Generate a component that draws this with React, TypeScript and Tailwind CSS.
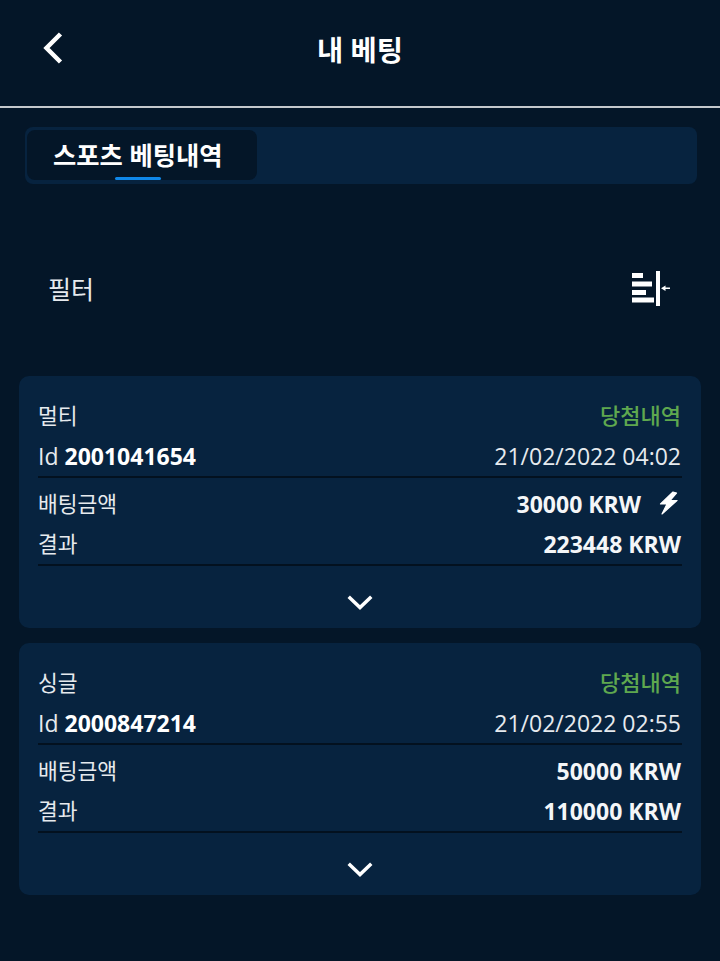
import React from "react";

const font = { fontFamily: '"Open Sans", "Noto Sans CJK KR", sans-serif' };

type Bet = {
  kind: string;
  id: string;
  date: string;
  stake: string;
  result: string;
  bolt?: boolean;
};

const bets: Bet[] = [
  { kind: "멀티", id: "2001041654", date: "21/02/2022 04:02", stake: "30000 KRW", result: "223448 KRW", bolt: true },
  { kind: "싱글", id: "2000847214", date: "21/02/2022 02:55", stake: "50000 KRW", result: "110000 KRW" },
];

const BetCard: React.FC<{ bet: Bet }> = ({ bet }) => {
  return (
    <div className="h-[252px] rounded-[10px] bg-[#07233f] pl-[19px] pr-[20px] pt-[20px] text-[#e6eaee]">
      <div className="flex h-[41px] items-start justify-between text-[21.5px] leading-[39px]">
        <span>{bet.kind}</span>
        <span className="text-[22px] font-medium text-[#5fa84f]">당첨내역</span>
      </div>
      <div className="-mr-[1px] flex h-[41px] items-center justify-between border-b-2 border-[#03111f] pr-[1px] text-[23px]">
        <span>
          Id <b className="font-bold text-white">{bet.id}</b>
        </span>
        <span>{bet.date}</span>
      </div>
      <div className="mt-[5px] flex h-[41px] items-center justify-between pt-[1px] text-[21.5px]">
        <span>배팅금액</span>
        <span className="flex items-center text-[23px] font-bold text-[#f4f6f8]">
          {bet.stake}
          {bet.bolt && (
            <svg viewBox="0 0 20 24" className="-mt-[3px] ml-[18px] mr-[2px] h-[24px] w-[20px]" fill="#fff" stroke="#fff" strokeWidth="1.2" strokeLinejoin="round">
              <path d="M14 1 L1.5 13 L8 13 L3 23 L18 9.5 L11 9.5 L17.5 2 Z" />
            </svg>
          )}
        </span>
      </div>
      <div className="-mr-[1px] flex h-[42px] items-center justify-between border-b-2 border-[#03111f] pr-[1px] text-[21.5px]">
        <span>결과</span>
        <span className="text-[23px] font-bold text-[#f4f6f8]">{bet.result}</span>
      </div>
      <div className="flex justify-center pl-[1px] pt-[29px]">
        <svg viewBox="0 0 26 16" className="h-[16px] w-[26px]" fill="none" stroke="#fff" strokeWidth="3.5" strokeLinecap="square">
          <path d="M3 3 L13 12.5 L23 3" />
        </svg>
      </div>
    </div>
  );
};

const App: React.FC = () => {
  return (
    <div className="h-[961px] w-[720px] overflow-hidden bg-[#041628]" style={font}>
      <header className="relative flex h-[108px] items-start justify-center border-b-2 border-[#c4c8cc] pt-[30px]">
        <svg viewBox="0 0 22 34" className="absolute left-[42px] top-[31px] h-[34px] w-[22px]" fill="none" stroke="#fff" strokeWidth="4.5">
          <path d="M18.5 3 L4.5 17 L18.5 31" />
        </svg>
        <h1 className="text-[28.5px] font-bold leading-[40px] text-white">내 베팅</h1>
      </header>

      <div className="ml-[25px] mr-[23px] mt-[19px] flex h-[57px] rounded-[8px] bg-[#07233f] pl-[2px] pt-[3px]">
        <div className="relative h-[50px] w-[230px] rounded-[8px] bg-[#041628] pl-[26px] text-[25.3px] font-bold leading-[50px] text-white">
          스포츠 베팅내역
          <div className="absolute left-[88px] top-[47px] h-[3px] w-[46px] rounded-full bg-[#0f87e8]" />
        </div>
      </div>

      <div className="mt-[77px] flex h-[56px] items-center justify-between pl-[48px] pr-[48px]">
        <span className="pt-[2px] text-[25px] text-[#e6eaee]">필터</span>
        <svg viewBox="0 0 40 36" className="h-[36px] w-[40px]" fill="#fff">
          <rect x="0" y="2" width="11" height="5" />
          <rect x="0" y="10.5" width="20" height="5" />
          <rect x="0" y="19" width="14" height="5" />
          <rect x="0" y="26.5" width="22" height="5" />
          <rect x="24" y="0" width="4" height="35" />
          <rect x="32" y="16.5" width="6" height="1.5" />
          <path d="M29 17.2 L33.5 14.5 L33.5 20 Z" />
        </svg>
      </div>

      <div className="mx-[19px] mt-[59px] flex flex-col gap-[15px]">
        {bets.map((bet) => (
          <BetCard key={bet.id} bet={bet} />
        ))}
      </div>
    </div>
  );
};

export default App;
